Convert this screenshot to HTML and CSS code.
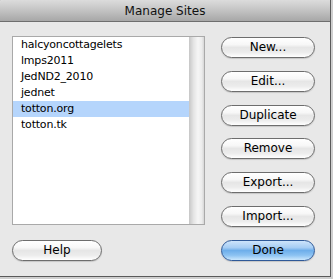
FILE: index.html
```html
<!DOCTYPE html>
<html>
<head>
<meta charset="utf-8">
<link rel="stylesheet" href="styles.css">
</head>
<body>
<div class="window">
  <div class="titlebar">Manage Sites</div>
  <div class="content">
    <div class="left">
      <div class="list">
        <div class="rows">
          <div class="row">halcyoncottagelets</div>
          <div class="row">lmps2011</div>
          <div class="row">JedND2_2010</div>
          <div class="row">jednet</div>
          <div class="row selected">totton.org</div>
          <div class="row">totton.tk</div>
        </div>
        <div class="scrolltrack"></div>
      </div>
      <div class="btn help">Help</div>
    </div>
    <div class="buttons">
      <div class="btn">New...</div>
      <div class="btn">Edit...</div>
      <div class="btn">Duplicate</div>
      <div class="btn">Remove</div>
      <div class="btn">Export...</div>
      <div class="btn">Import...</div>
      <div class="btn primary">Done</div>
    </div>
  </div>
</div>
</body>
</html>
```
FILE: styles.css
```css
html, body {
  margin: 0;
  padding: 0;
  background: #cfcfcf;
  width: 333px;
  height: 279px;
  overflow: hidden;
}
body {
  font-family: "DejaVu Sans", sans-serif;
  color: #000;
}
.window {
  width: 330px;
  height: 276px;
  border-right: 1px solid #5a5a5a;
  border-bottom: 1px solid #5a5a5a;
  background: #e8e8e8;
  border-top-left-radius: 3px;
  overflow: hidden;
  display: flex;
  flex-direction: column;
}
.titlebar {
  height: 21px;
  border-bottom: 1px solid #6e6e6e;
  background: linear-gradient(to bottom, #dcdcdc 0%, #c8c8c8 40%, #a7a7a7 100%);
  text-align: center;
  font-size: 12px;
  line-height: 22px;
  color: #111;
  flex: none;
}
.content {
  padding: 14px 15px 0 12px;
  display: flex;
  justify-content: space-between;
  align-items: stretch;
}
.left {
  display: flex;
  flex-direction: column;
  justify-content: space-between;
  align-items: flex-start;
}
.list {
  width: 191px;
  height: 187px;
  border: 1px solid #a9a9a9;
  background: #fff;
  display: flex;
}
.rows {
  flex: 1;
}
.row {
  height: 16px;
  line-height: 16px;
  font-size: 11px;
  letter-spacing: -0.2px;
  padding-left: 8px;
  white-space: nowrap;
}
.row.selected {
  background: #b5d5fc;
}
.scrolltrack {
  width: 15px;
  background: linear-gradient(to right, #c6c6c6 0%, #e4e4e4 30%, #f6f6f6 60%, #ececec 85%, #d6d6d6 100%);
}
.buttons {
  width: 94px;
  display: flex;
  flex-direction: column;
  gap: 12.8px;
  padding-top: 1px;
}
.btn {
  height: 19px;
  border: 1px solid #6d6d6d;
  border-radius: 11px;
  background: linear-gradient(to bottom, #ffffff 0%, #f7f7f7 35%, #e6e6e6 50%, #ececec 75%, #ffffff 100%);
  font-size: 12px;
  line-height: 19px;
  text-align: center;
  box-shadow: 0 1px 1px rgba(0,0,0,0.15);
  box-sizing: content-box;
}
.btn.primary {
  border-color: #2f5998;
  background: linear-gradient(to bottom, #cde4fb 0%, #a6cdf4 35%, #6eaeea 50%, #8cc2f2 75%, #cbe7fd 100%);
}
.btn.help {
  width: 88px;
}
```
